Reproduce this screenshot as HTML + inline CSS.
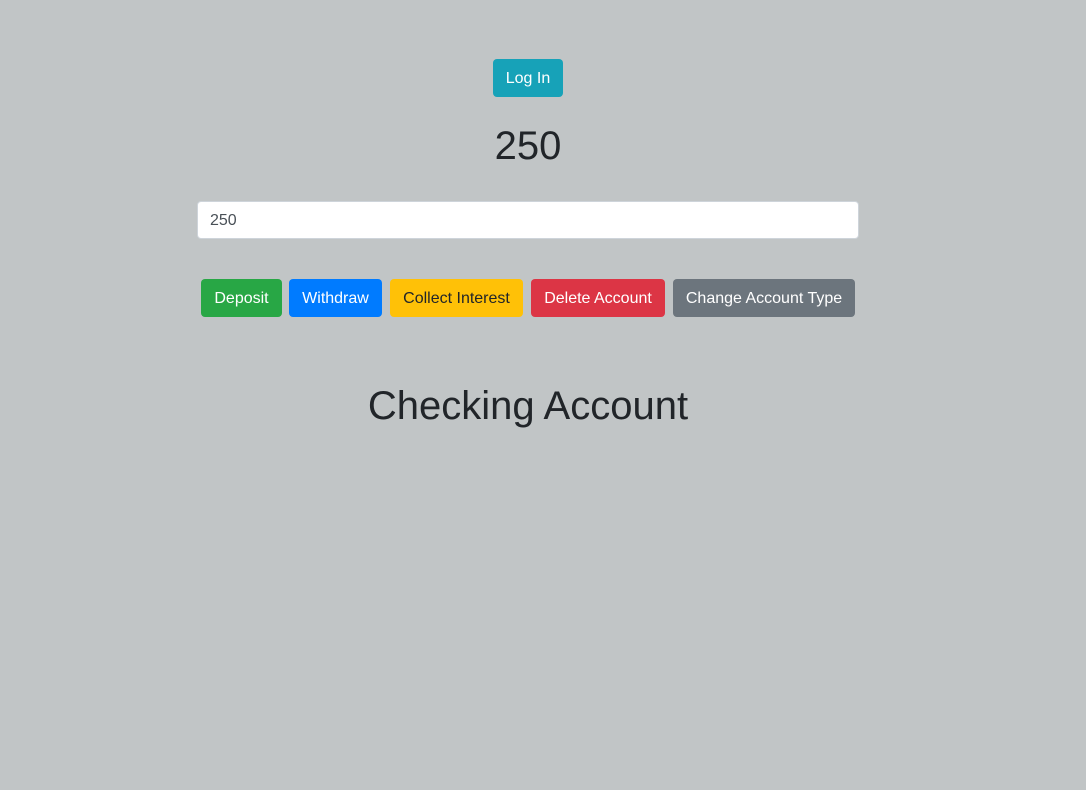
<!DOCTYPE html>
<html><head><style>
body{margin:0;background:#c1c5c6;font-family:"Liberation Sans",sans-serif;width:1086px;height:790px;position:relative;color:#212529}
.btn{position:absolute;height:38px;line-height:38px;padding-top:1px;font-size:16px;border-radius:4px;text-align:center;color:#fff;box-sizing:border-box}
.t{position:absolute;left:0;width:1056px;text-align:center}
</style></head><body>
<div class="btn" style="left:493px;top:59px;width:70px;background:#17a2b8">Log In</div>
<div class="t" style="top:124px;font-size:40px;left:0;width:1056px">250</div>
<div style="position:absolute;left:197px;top:201px;width:662px;height:38px;box-sizing:border-box;background:#fff;border:1px solid #ced4da;border-radius:4px;padding-left:12px;padding-top:1px;line-height:36px;font-size:16px;color:#495057">250</div>
<div class="btn" style="left:201px;top:279px;width:81px;background:#28a745">Deposit</div>
<div class="btn" style="left:289px;top:279px;width:93px;background:#007bff">Withdraw</div>
<div class="btn" style="left:390px;top:279px;width:133px;background:#ffc107;color:#212529">Collect Interest</div>
<div class="btn" style="left:531px;top:279px;width:134px;background:#dc3545">Delete Account</div>
<div class="btn" style="left:673px;top:279px;width:182px;background:#6c757d">Change Account Type</div>
<div class="t" style="top:384px;font-size:40px">Checking Account</div>
</body></html>
